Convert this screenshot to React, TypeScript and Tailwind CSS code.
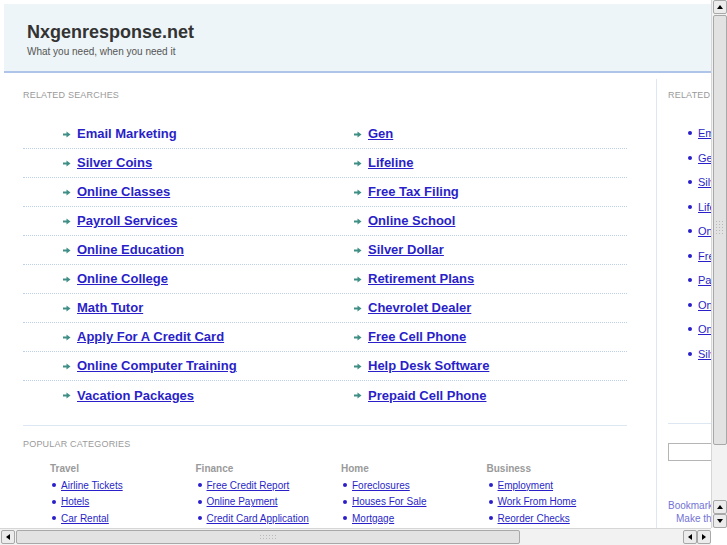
import React from "react"

const leftLinks = [
  "Email Marketing",
  "Silver Coins",
  "Online Classes",
  "Payroll Services",
  "Online Education",
  "Online College",
  "Math Tutor",
  "Apply For A Credit Card",
  "Online Computer Training",
  "Vacation Packages",
]

const rightLinks = [
  "Gen",
  "Lifeline",
  "Free Tax Filing",
  "Online School",
  "Silver Dollar",
  "Retirement Plans",
  "Chevrolet Dealer",
  "Free Cell Phone",
  "Help Desk Software",
  "Prepaid Cell Phone",
]

const sideLinks = ["Email Marketing", "Gen", "Silver Coins", "Lifeline", "Online Classes", "Free Tax Filing", "Payroll Services", "Online School", "Online Education", "Silver Dollar"]

const categories = [
  { title: "Travel", links: ["Airline Tickets", "Hotels", "Car Rental"] },
  { title: "Finance", links: ["Free Credit Report", "Online Payment", "Credit Card Application"] },
  { title: "Home", links: ["Foreclosures", "Houses For Sale", "Mortgage"] },
  { title: "Business", links: ["Employment", "Work From Home", "Reorder Checks"] },
]

const Arrow = () => (
  <svg width="8" height="7" viewBox="0 0 8 7" className="shrink-0">
    <rect x="0" y="2.5" width="4" height="2" fill="#3f8f86" />
    <path d="M3.5 0.5 L7.5 3.5 L3.5 6.5 Z" fill="#3f8f86" />
  </svg>
)

const Dot = () => <span className="w-[4px] h-[4px] rounded-full bg-[#2a1fc8] shrink-0" />

const UpBtn = () => (
  <div className="w-[14px] h-[14px] bg-[#ececec] border border-[#a8a8a8] rounded-[2px] flex items-center justify-center">
    <span className="w-0 h-0 border-l-[3px] border-r-[3px] border-b-[4px] border-l-transparent border-r-transparent border-b-black" />
  </div>
)
const DownBtn = () => (
  <div className="w-[14px] h-[14px] bg-[#ececec] border border-[#a8a8a8] rounded-[2px] flex items-center justify-center">
    <span className="w-0 h-0 border-l-[3px] border-r-[3px] border-t-[4px] border-l-transparent border-r-transparent border-t-black" />
  </div>
)
const LeftBtn = () => (
  <div className="w-[14px] h-[14px] bg-[#ececec] border border-[#a8a8a8] rounded-[2px] flex items-center justify-center">
    <span className="w-0 h-0 border-t-[3px] border-b-[3px] border-r-[4px] border-t-transparent border-b-transparent border-r-black" />
  </div>
)
const RightBtn = () => (
  <div className="w-[14px] h-[14px] bg-[#ececec] border border-[#a8a8a8] rounded-[2px] flex items-center justify-center">
    <span className="w-0 h-0 border-t-[3px] border-b-[3px] border-l-[4px] border-t-transparent border-b-transparent border-l-black" />
  </div>
)

const Grip = ({ vertical }: { vertical?: boolean }) => (
  <div className={vertical ? "grid grid-cols-3 gap-[2px]" : "grid grid-cols-6 gap-[2px]"}>
    {Array.from({ length: vertical ? 15 : 12 }).map((_, i) => (
      <span key={i} className="w-[1px] h-[1px] bg-[#b8b8b8]" />
    ))}
  </div>
)

export default function App() {
  return (
    <div className="w-[727px] h-[545px] overflow-hidden bg-white font-['Liberation_Sans',Arial,sans-serif] flex flex-col">
      <div className="flex h-[528px]">
        {/* page */}
        <div className="w-[711px] h-[528px] overflow-hidden">
          <div className="w-[780px] pl-[4px] pt-[4px]">
            <div className="h-[69px] bg-[#eef5f8] border-b-2 border-[#aec5e9] pl-[23px] pt-[18px]">
              <div className="text-[18px] leading-[20px] font-bold text-[#333]">Nxgenresponse.net</div>
              <div className="text-[10px] leading-[13px] text-[#555] mt-[3px]">What you need, when you need it</div>
            </div>

            <div className="flex">
              {/* main column */}
              <div className="w-[652px] pl-[19px] shrink-0">
                <div className="mt-[16px] text-[9px] leading-[12px] tracking-[0.2px] text-[#9a9a9a]">RELATED SEARCHES</div>
                <div className="mt-[19px] w-[604px]">
                  {leftLinks.map((l, i) => (
                    <div key={l} className={"h-[29px] flex items-center " + (i < 9 ? "border-b border-dotted border-[#bcd0ea]" : "")}>
                      <div className="w-[302px] pl-[40px] flex items-center gap-[6px]">
                        <Arrow />
                        <a className={"text-[13px] font-bold text-[#2a1fc8] whitespace-nowrap " + (i === 0 ? "" : "underline")}>{l}</a>
                      </div>
                      <div className="pl-[29px] flex items-center gap-[6px]">
                        <Arrow />
                        <a className="text-[13px] font-bold text-[#2a1fc8] underline whitespace-nowrap">{rightLinks[i]}</a>
                      </div>
                    </div>
                  ))}
                </div>
                <div className="mt-[15px] w-[604px] border-t border-[#dde7f3]" />
                <div className="mt-[12px] text-[9px] leading-[12px] tracking-[0.2px] text-[#9a9a9a]">POPULAR CATEGORIES</div>
                <div className="mt-[13px] pl-[27px] flex">
                  {categories.map((c) => (
                    <div key={c.title} className="w-[145.5px]">
                      <div className="text-[10px] leading-[12px] font-bold text-[#9a9a9a]">{c.title}</div>
                      <div className="mt-[2px] pl-[2px] flex flex-col">
                        {c.links.map((l) => (
                          <div key={l} className="h-[16.5px] flex items-center gap-[5px]">
                            <Dot />
                            <a className="text-[10px] text-[#2a1fc8] underline whitespace-nowrap">{l}</a>
                          </div>
                        ))}
                      </div>
                    </div>
                  ))}
                </div>
              </div>

              {/* side column */}
              <div className="border-l border-[#dde7f3] pl-[11px] mt-[6px] w-[120px] h-[460px] shrink-0">
                <div className="mt-[10px] text-[9px] leading-[12px] tracking-[0.2px] text-[#9a9a9a] whitespace-nowrap">RELATED SEARCHES</div>
                <div className="mt-[20px] pl-[20px] flex flex-col">
                  {sideLinks.map((l) => (
                    <div key={l} className="h-[24.5px] flex items-center gap-[6px]">
                      <Dot />
                      <a className="text-[11px] text-[#2a1fc8] underline whitespace-nowrap">{l}</a>
                    </div>
                  ))}
                </div>
                <div className="mt-[57px] border-t border-[#dde7f3] w-[90px]" />
                <div className="mt-[19px] w-[90px] h-[18px] border border-[#b5b5b5]" />
                <div className="mt-[38px] text-[10px] leading-[13px] text-[#7373d6] whitespace-nowrap">Bookmark this page</div>
                <div className="pl-[8px] text-[10px] leading-[13px] text-[#7373d6] whitespace-nowrap">Make this your homepage</div>
              </div>
            </div>
          </div>
        </div>

        {/* vertical scrollbar */}
        <div className="w-[16px] h-[528px] bg-[#f2f2f2] border-l border-[#d6d6d6] flex flex-col items-center">
          <UpBtn />
          <div className="w-[14px] h-[430px] mt-[1px] bg-[#e2e2e2] border border-[#a8a8a8] rounded-[2px] flex flex-col items-center pt-[205px]">
            <Grip vertical />
          </div>
          <div className="flex-1" />
          <UpBtn />
          <DownBtn />
        </div>
      </div>

      {/* horizontal scrollbar */}
      <div className="flex h-[17px]">
        <div className="w-[711px] h-[17px] bg-[#f2f2f2] border-t border-[#d6d6d6] flex items-center pl-[1px]">
          <LeftBtn />
          <div className="w-[504px] h-[14px] ml-[1px] bg-[#e2e2e2] border border-[#a8a8a8] rounded-[2px] flex items-center justify-center">
            <Grip />
          </div>
          <div className="flex-1" />
          <LeftBtn />
          <RightBtn />
        </div>
        <div className="w-[16px] h-[17px] bg-white" />
      </div>
    </div>
  )
}
